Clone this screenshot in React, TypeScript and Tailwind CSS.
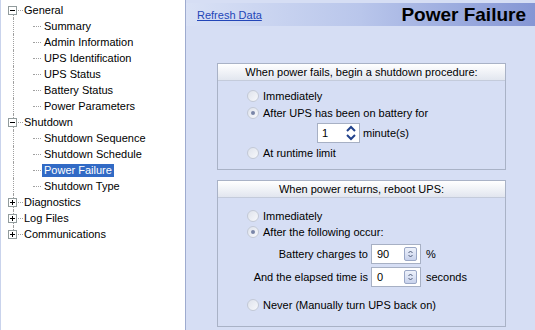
import React from "react";

type Node = { label: string; kind: "root" | "child"; open?: boolean; selected?: boolean };

const nodes: Node[] = [
  { label: "General", kind: "root", open: true },
  { label: "Summary", kind: "child" },
  { label: "Admin Information", kind: "child" },
  { label: "UPS Identification", kind: "child" },
  { label: "UPS Status", kind: "child" },
  { label: "Battery Status", kind: "child" },
  { label: "Power Parameters", kind: "child" },
  { label: "Shutdown", kind: "root", open: true },
  { label: "Shutdown Sequence", kind: "child" },
  { label: "Shutdown Schedule", kind: "child" },
  { label: "Power Failure", kind: "child", selected: true },
  { label: "Shutdown Type", kind: "child" },
  { label: "Diagnostics", kind: "root", open: false },
  { label: "Log Files", kind: "root", open: false },
  { label: "Communications", kind: "root", open: false },
];

function TreeRow({ node, first, last }: { node: Node; first: boolean; last: boolean }) {
  return (
    <div className="relative h-4 flex items-center">
      <div
        className={
          "absolute left-[12px] border-l border-dotted border-[#a0a0a0] " +
          (first ? "top-[8px] bottom-0" : last ? "top-0 h-[8px]" : "top-0 bottom-0")
        }
      />
      {node.kind === "root" ? (
        <>
          <div className="absolute left-[17px] top-[8px] w-[5px] border-t border-dotted border-[#a0a0a0]" />
          <div className="absolute left-[7px] top-[4px] w-[9px] h-[9px] border border-[#919b9c] bg-white">
            <div className="absolute left-[1px] top-[3px] w-[5px] h-px bg-black" />
            {!node.open && <div className="absolute left-[3px] top-[1px] w-px h-[5px] bg-black" />}
          </div>
          <span className="ml-[23px] leading-none">{node.label}</span>
        </>
      ) : (
        <>
          <div className="absolute left-[32px] top-[8px] w-[8px] border-t border-dotted border-[#a0a0a0]" />
          {node.selected ? (
            <span className="ml-[41px] px-[2px] h-[13px] flex items-center bg-[#316ac5] text-white leading-none">
              {node.label}
            </span>
          ) : (
            <span className="ml-[43px] leading-none">{node.label}</span>
          )}
        </>
      )}
    </div>
  );
}

function Radio({ checked, label }: { checked?: boolean; label: string }) {
  return (
    <div className="h-4 flex items-center pl-[29px]">
      <div className="w-[12px] h-[12px] rounded-full border border-[#c3c9d6] bg-gradient-to-br from-[#dfe3ec] to-[#f7f8fb] flex items-center justify-center">
        {checked && <div className="w-[4px] h-[4px] rounded-full bg-[#7a86a8]" />}
      </div>
      <span className="ml-[4px] leading-none">{label}</span>
    </div>
  );
}

function SmallSpin({ value }: { value: string }) {
  return (
    <div className="w-[50px] h-[20px] bg-white border border-[#a7b0c4] flex items-center">
      <span className="pl-[5px] flex-1 leading-none">{value}</span>
      <div className="w-[13px] h-[14px] mr-[3px] border border-[#9aa7c6] rounded-[2px] bg-gradient-to-b from-[#eef2fb] to-[#c8d2ec] flex items-center justify-center">
        <svg width="7" height="8" viewBox="0 0 7 8">
          <path d="M1.5 3 L3.5 1 L5.5 3" fill="none" stroke="#4d5a78" strokeWidth="1" />
          <path d="M1.5 5 L3.5 7 L5.5 5" fill="none" stroke="#4d5a78" strokeWidth="1" />
        </svg>
      </div>
    </div>
  );
}

function BoxHeader({ text }: { text: string }) {
  return (
    <div className="h-[17px] flex items-center justify-center bg-gradient-to-b from-[#ffffff] to-[#e2e6ef] border-b border-[#c4cbdb] leading-none">
      {text}
    </div>
  );
}

export default function App() {
  return (
    <div
      className="w-[535px] h-[330px] flex overflow-hidden text-[11px] text-black"
      style={{ fontFamily: '"Liberation Sans", Arial, sans-serif' }}
    >
      <div className="w-[186px] h-full bg-white border-l border-[#c9d3ec] border-r border-r-[#9eabcf] pt-[2px] shrink-0">
        {nodes.map((n, i) => (
          <TreeRow key={n.label} node={n} first={i === 0} last={i === nodes.length - 1} />
        ))}
      </div>
      <div className="flex-1 h-full bg-[#d6def4] pt-[3px] flex flex-col">
        <div className="h-[23px] bg-gradient-to-r from-[#d9e1f5] via-[#b9c6eb] to-[#8596d4] flex items-center justify-between pl-[11px] pr-[9px]">
          <span className="text-[#2346b8] underline leading-none mt-[2px]">Refresh Data</span>
          <span className="text-[19px] font-bold leading-none">Power Failure</span>
        </div>

        <div className="ml-[31px] mt-[37px] w-[289px] h-[107px] border border-[#a9b2c6] flex flex-col">
          <BoxHeader text="When power fails, begin a shutdown procedure:" />
          <div className="pt-[7px] flex flex-col">
            <Radio label="Immediately" />
            <div className="mt-px">
              <Radio checked label="After UPS has been on battery for" />
            </div>
            <div className="mt-[2px] h-[20px] flex items-center pl-[99px]">
              <div className="w-[43px] h-[20px] bg-white border border-[#a7b0c4] flex items-center">
                <span className="pl-[4px] flex-1 leading-none">1</span>
                <svg width="12" height="16" viewBox="0 0 12 16" className="mr-[2px]">
                  <path d="M2 6 L6 2 L10 6" fill="none" stroke="#22428c" strokeWidth="2" />
                  <path d="M2 10 L6 14 L10 10" fill="none" stroke="#22428c" strokeWidth="2" />
                </svg>
              </div>
              <span className="ml-[3px] leading-none">minute(s)</span>
            </div>
            <div className="mt-[2px]">
              <Radio label="At runtime limit" />
            </div>
          </div>
        </div>

        <div className="ml-[31px] mt-[10px] w-[289px] h-[147px] border border-[#a9b2c6] flex flex-col">
          <BoxHeader text="When power returns, reboot UPS:" />
          <div className="pt-[10px] flex flex-col">
            <Radio label="Immediately" />
            <Radio checked label="After the following occur:" />
            <div className="mt-[4px] h-[20px] flex items-center">
              <span className="w-[150px] text-right leading-none">Battery charges to</span>
              <div className="ml-[3px]">
                <SmallSpin value="90" />
              </div>
              <span className="ml-[5px] leading-none">%</span>
            </div>
            <div className="mt-[3px] h-[20px] flex items-center">
              <span className="w-[150px] text-right leading-none">And the elapsed time is</span>
              <div className="ml-[3px]">
                <SmallSpin value="0" />
              </div>
              <span className="ml-[5px] leading-none">seconds</span>
            </div>
            <div className="mt-[10px]">
              <Radio label="Never (Manually turn UPS back on)" />
            </div>
          </div>
        </div>
      </div>
    </div>
  );
}
